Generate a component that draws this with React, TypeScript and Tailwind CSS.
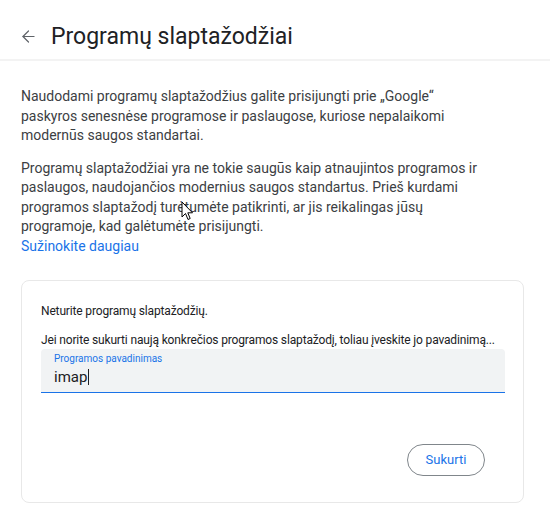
import { ArrowLeft } from "lucide-react";

const font = { fontFamily: "Roboto, 'Noto Sans', Arial, sans-serif" };

export default function App() {
  return (
    <div className="relative w-[550px] h-[508px] overflow-hidden bg-white text-[#3c4043]" style={font}>
      {/* Header */}
      <div className="flex items-center h-[61px] pl-[19px] pt-[14px] border-b-2 border-[#f3f3f3]">
        <ArrowLeft className="w-[19px] h-[19px] text-[#5f6368]" strokeWidth={1.5} />
        <h1 className="ml-[13px] text-[23px] leading-[32px] text-[#202124]">
          Programų slaptažodžiai
        </h1>
      </div>

      {/* Body */}
      <div className="px-[21px] pt-[26px] text-[14px] leading-[19.5px]">
        <p>
          Naudodami programų slaptažodžius galite prisijungti prie „Google“
          <br />
          paskyros senesnėse programose ir paslaugose, kuriose nepalaikomi
          <br />
          modernūs saugos standartai.
        </p>
        <p className="mt-[13px]">
          Programų slaptažodžiai yra ne tokie saugūs kaip atnaujintos programos ir
          <br />
          paslaugos, naudojančios modernius saugos standartus. Prieš kurdami
          <br />
          programos slaptažodį turėtumėte patikrinti, ar jis reikalingas jūsų
          <br />
          programoje, kad galėtumėte prisijungti.
        </p>
        <a className="block text-[#1a73e8]">Sužinokite daugiau</a>

        {/* Card */}
        <div className="mt-[24px] w-[503px] h-[223px] rounded-[8px] border border-[#e8e8e8] px-[19px] pt-[21px]">
          <p className="text-[12px] leading-[18px] text-[#202124] tracking-[-0.15px]">Neturite programų slaptažodžių.</p>
          <p className="mt-[11px] text-[12px] leading-[18px] text-[#202124] whitespace-nowrap tracking-[-0.15px]">
            Jei norite sukurti naują konkrečios programos slaptažodį, toliau įveskite jo pavadinimą...
          </p>
          <div className="w-[464px] h-[44px] bg-[#f1f3f4] rounded-t-[4px] border-b border-[#1a73e8] px-[13px] pt-[4px]">
            <div className="text-[10px] leading-[12px] text-[#1a73e8]">Programos pavadinimas</div>
            <div className="mt-[2px] text-[15px] leading-[20px] text-[#202124] flex items-center">
              imap
              <span className="inline-block w-px h-[16px] bg-[#202124] ml-px" />
            </div>
          </div>
          <div className="flex justify-end mt-[51px] pr-[19px]">
            <button className="w-[78px] h-[32px] rounded-full border border-[#80868b] text-[13px] text-[#1a73e8] bg-white">
              Sukurti
            </button>
          </div>
        </div>
      </div>

      {/* Mouse cursor */}
      <svg className="absolute left-[181px] top-[201px]" width="13" height="20" viewBox="0 0 13 20">
        <path d="M1 1 L1 16 L4.5 12.5 L7 18.5 L9.2 17.5 L6.8 11.8 L11.5 11.8 Z" fill="white" stroke="black" strokeWidth="1" strokeLinejoin="round" />
      </svg>
    </div>
  );
}
